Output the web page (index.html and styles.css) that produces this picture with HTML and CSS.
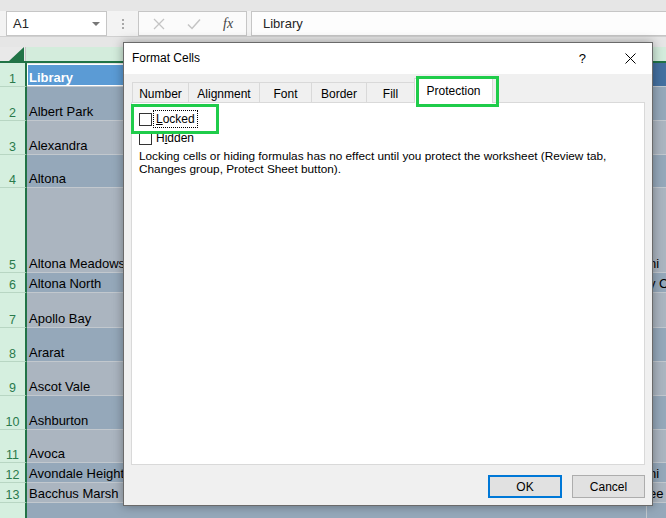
FILE: index.html
```html
<!DOCTYPE html>
<html lang="en">
<head>
  <meta charset="UTF-8">
  <title>Format Cells - Protection</title>
  <link rel="stylesheet" href="styles.css">
</head>
<body>
  <div class="topband"></div>
  <div class="fbar">
    <div class="namebox">
      <span>A1</span>
      <span class="caret"></span>
    </div>
    <div class="grip"><i></i><i></i><i></i></div>
    <div class="fbtns">
      <svg width="12" height="12" viewBox="0 0 12 12"><path d="M1 1L11 11M11 1L1 11" stroke="#c4c4c4" stroke-width="1.3" fill="none"/></svg>
      <svg width="14" height="12" viewBox="0 0 14 12"><path d="M1 6.5L5 10.5L13 1.5" stroke="#c4c4c4" stroke-width="1.5" fill="none"/></svg>
      <span class="fx">fx</span>
    </div>
    <div class="finput">Library</div>
  </div>

  <div class="sheet">
    <div class="row colhead">
      <div class="corner"><svg width="15" height="14" viewBox="0 0 15 14"><path d="M15 0L15 14L0 14Z" fill="#217346"/></svg></div>
      <div class="ch"></div>
    </div>
    <div class="row h24">
      <div class="rh">1</div>
      <div class="c a active">Library</div>
      <div class="c cc hdr"></div>
    </div>
    <div class="row h34 dk">
      <div class="rh">2</div>
      <div class="c a">Albert Park</div>
      <div class="c cc"></div>
    </div>
    <div class="row h34 lt">
      <div class="rh">3</div>
      <div class="c a">Alexandra</div>
      <div class="c cc"></div>
    </div>
    <div class="row h33 dk">
      <div class="rh">4</div>
      <div class="c a">Altona</div>
      <div class="c cc"></div>
    </div>
    <div class="row h85 lt">
      <div class="rh">5</div>
      <div class="c a">Altona Meadows</div>
      <div class="c cc">ni</div>
    </div>
    <div class="row h20 dk">
      <div class="rh">6</div>
      <div class="c a">Altona North</div>
      <div class="c cc">y C</div>
    </div>
    <div class="row h35 lt">
      <div class="rh">7</div>
      <div class="c a">Apollo Bay</div>
      <div class="c cc"></div>
    </div>
    <div class="row h34 dk">
      <div class="rh">8</div>
      <div class="c a">Ararat</div>
      <div class="c cc"></div>
    </div>
    <div class="row h34 lt">
      <div class="rh">9</div>
      <div class="c a">Ascot Vale</div>
      <div class="c cc"></div>
    </div>
    <div class="row h34 dk">
      <div class="rh">10</div>
      <div class="c a">Ashburton</div>
      <div class="c cc"></div>
    </div>
    <div class="row h33 lt">
      <div class="rh">11</div>
      <div class="c a">Avoca</div>
      <div class="c cc"></div>
    </div>
    <div class="row h20 dk">
      <div class="rh">12</div>
      <div class="c a">Avondale Heights</div>
      <div class="c cc">ni</div>
    </div>
    <div class="row h20 lt">
      <div class="rh">13</div>
      <div class="c a">Bacchus Marsh</div>
      <div class="c cc">ee</div>
    </div>
    <div class="row h20 dk">
      <div class="rh"></div>
      <div class="c a"></div>
      <div class="c cc"></div>
    </div>
  </div>

  <div class="dialog">
    <div class="dtitle">
      <span class="dname">Format Cells</span>
      <span class="help">?</span>
      <svg class="close" width="11" height="11" viewBox="0 0 11 11"><path d="M0.5 0.5L10.5 10.5M10.5 0.5L0.5 10.5" stroke="#000" stroke-width="1" fill="none"/></svg>
    </div>
    <div class="tabs">
      <div class="tab w57">Number</div>
      <div class="tab w72">Alignment</div>
      <div class="tab w53">Font</div>
      <div class="tab w56">Border</div>
      <div class="tab w48">Fill</div>
      <div class="tab current">Protection</div>
    </div>
    <div class="panel">
      <label class="check">
        <span class="box"></span>
        <span class="focus"><u>L</u>ocked</span>
      </label>
      <label class="check">
        <span class="box"></span>
        <span>H<u>i</u>dden</span>
      </label>
      <p class="note">Locking cells or hiding formulas has no effect until you protect the worksheet (Review tab,<br>Changes group, Protect Sheet button).</p>
    </div>
    <div class="dfoot">
      <button class="btn default">OK</button>
      <button class="btn">Cancel</button>
    </div>
    <div class="mark mark-tab"></div>
    <div class="mark mark-locked"></div>
  </div>
</body>
</html>
```

FILE: styles.css
```css
body {
  margin: 0;
  width: 666px;
  height: 518px;
  overflow: hidden;
  background: #e6e6e6;
  font-family: 'Liberation Sans', Arial, sans-serif;
  position: relative;
}
.topband {
  height: 11px;
  background: #e6e6e6;
}
.fbar {
  display: flex;
  height: 26px;
  background: #f3f3f3;
  border-bottom: 1px solid #d0d0d0;
  box-sizing: border-box;
}
.namebox {
  margin-left: 6px;
  width: 101px;
  box-sizing: border-box;
  background: #fff;
  border: 1px solid #c6c6c6;
  display: flex;
  align-items: center;
  justify-content: space-between;
  padding: 0 6px 0 6px;
  font-size: 13px;
  color: #262626;
}
.caret {
  width: 0;
  height: 0;
  border-left: 4px solid transparent;
  border-right: 4px solid transparent;
  border-top: 4px solid #777;
}
.grip {
  width: 31px;
  display: flex;
  flex-direction: column;
  align-items: center;
  justify-content: center;
  gap: 2px;
}
.grip i {
  width: 2px;
  height: 2px;
  background: #a8a8a8;
}
.fbtns {
  width: 109px;
  box-sizing: border-box;
  background: #fbfbfb;
  border: 1px solid #c6c6c6;
  display: flex;
  align-items: center;
  padding-left: 14px;
  gap: 22px;
}
.fx {
  font-family: 'Liberation Serif', serif;
  font-style: italic;
  font-size: 14px;
  color: #444;
}
.finput {
  flex: 1;
  margin-left: 4px;
  background: #fdfdfd;
  border: 1px solid #c6c6c6;
  border-right: none;
  display: flex;
  align-items: center;
  padding-left: 11px;
  font-size: 13px;
  color: #262626;
}
.sheet {
  margin-top: 10px;
}
.row {
  display: flex;
  box-sizing: border-box;
  border-bottom: 1px solid #c2c8ce;
}
.h20 { height: 20px; }
.h24 { height: 24px; }
.h33 { height: 33px; }
.h34 { height: 34px; }
.h35 { height: 35px; }
.h85 { height: 85px; }
.colhead {
  height: 16px;
  border-bottom: 2px solid #217346;
  background: #d3ecdc;
}
.corner {
  width: 26px;
  background: #e9e9e9;
  border-right: 1px solid #c6c6c6;
  display: flex;
  align-items: flex-end;
  justify-content: flex-end;
  padding-right: 1px;
  box-sizing: border-box;
}
.ch {
  flex: 1;
}
.rh {
  width: 25px;
  flex: 0 0 25px;
  background: #d5efdf;
  border-right: 2px solid #217346;
  color: #2a7a4c;
  font-size: 12.5px;
  display: flex;
  align-items: flex-end;
  justify-content: center;
  margin-bottom: -1px;
  border-bottom: 1px solid #b8d6c3;
}
.c {
  display: flex;
  align-items: flex-end;
  padding: 0 0 1px 2px;
  font-size: 13px;
  color: #000;
  white-space: nowrap;
  overflow: hidden;
}
.a {
  flex: 0 0 617px;
}
.cc {
  flex: 1;
  padding-left: 2px;
  border-left: 1px solid #c2c8ce;
}
.dk .c { background: #95a8ba; }
.lt .c { background: #abb5c0; }
.active {
  background: #5b9bd5;
  color: #fff;
  font-weight: bold;
  box-shadow: inset 0 0 0 1px #fff;
  margin-top: 1px;
  padding-bottom: 1px;
}
.hdr {
  background: #4470a0;
}

/* dialog */
.dialog {
  position: absolute;
  left: 123px;
  top: 42px;
  width: 530px;
  height: 464px;
  box-sizing: border-box;
  border: 1px solid #6a6a6a;
  background: #f0f0f0;
  box-shadow: 0 0 10px rgba(0, 0, 0, 0.35);
  display: flex;
  flex-direction: column;
  font-size: 12px;
  color: #000;
}
.dtitle {
  height: 31px;
  flex: 0 0 31px;
  box-sizing: border-box;
  background: #fff;
  display: flex;
  align-items: center;
  padding: 0 0 1px 8px;
}
.dname {
  flex: 1;
}
.help {
  font-size: 13px;
  margin-right: 39px;
}
.close {
  margin-right: 16px;
}
.tabs {
  display: flex;
  align-items: flex-end;
  height: 24px;
  margin: 4px 0 0 8px;
  position: relative;
  z-index: 1;
}
.tab {
  height: 20px;
  box-sizing: border-box;
  border: 1px solid #d9d9d9;
  border-bottom: none;
  margin-right: -1px;
  display: flex;
  align-items: center;
  justify-content: center;
  padding-top: 2px;
}
.w57 { width: 57px; }
.w72 { width: 72px; }
.w53 { width: 53px; }
.w56 { width: 56px; }
.w48 { width: 49px; }
.tab.current {
  width: 79px;
  height: 25px;
  margin-bottom: -1px;
  background: #fff;
  padding-top: 0;
}
.panel {
  height: 363px;
  box-sizing: border-box;
  margin: 0 7px;
  background: #fff;
  border: 1px solid #d9d9d9;
  padding: 9px 7px;
}
.check {
  display: flex;
  align-items: center;
  gap: 4px;
  height: 14px;
  margin-bottom: 5px;
}
.box {
  width: 13px;
  height: 13px;
  box-sizing: border-box;
  border: 1px solid #333;
  background: #fff;
}
.focus {
  outline: 1px dotted #000;
  outline-offset: 1px;
  padding: 0 1px;
  margin-left: -1px;
}
.note {
  margin: 4px 0 0;
  line-height: 13px;
  font-size: 11.8px;
}
.dfoot {
  display: flex;
  justify-content: flex-end;
  gap: 10px;
  margin: 10px 7px 0 0;
}
.btn {
  width: 73px;
  height: 23px;
  font-family: inherit;
  font-size: 12px;
  background: #e1e1e1;
  border: 1px solid #adadad;
  padding: 0;
  color: #000;
}
.btn.default {
  width: 74px;
  border: 2px solid #0078d7;
}
.mark {
  position: absolute;
  border: 3px solid #1fcc4a;
  box-sizing: border-box;
  z-index: 2;
}
.mark-tab {
  left: 292px;
  top: 33px;
  width: 83px;
  height: 31px;
}
.mark-locked {
  left: 7px;
  top: 61px;
  width: 88px;
  height: 30px;
}
```
